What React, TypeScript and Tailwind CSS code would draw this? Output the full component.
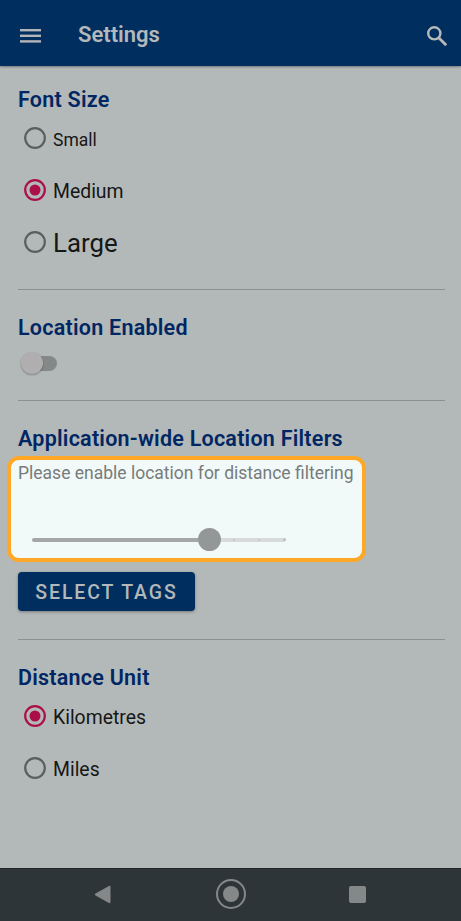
import type { ReactNode } from "react";

function Heading({ children, className = "" }: { children: ReactNode; className?: string }) {
  return (
    <h2
      className={`h-[26px] text-[21.5px] leading-[28px] font-semibold tracking-[0.24px] whitespace-nowrap text-[#002663] ${className}`}
    >
      {children}
    </h2>
  );
}

function Radio({ label, checked = false, className }: { label: string; checked?: boolean; className: string }) {
  return (
    <div className={`flex items-center gap-[7px] pl-[6px] text-black/90 ${className}`}>
      <svg
        className={`size-[22px] shrink-0 ${checked ? "text-[#ab0f47]" : "text-[#5b5e5f]"}`}
        viewBox="0 0 22 22"
        fill="none"
      >
        <circle cx="11" cy="11" r="9.8" stroke="currentColor" strokeWidth="2.2" />
        {checked && <circle cx="11" cy="11" r="5.5" fill="currentColor" />}
      </svg>
      <span className="pt-[3px] whitespace-nowrap">{label}</span>
    </div>
  );
}

function Divider({ className }: { className: string }) {
  return <div className={`h-px w-[427px] bg-[#8d9192] ${className}`} />;
}

export default function App() {
  return (
    <div className="flex h-[921px] w-[461px] flex-col overflow-hidden bg-[#b3b8b8] font-['Roboto',sans-serif]">
      <header className="flex h-[66px] shrink-0 items-center bg-[#002e5f] pt-[4px] pr-[14px] pl-[20px] shadow-[0_1px_2px_rgba(0,0,0,0.35)]">
        <svg className="mt-[2px] h-[14px] w-[21px]" viewBox="0 0 21 14" fill="#b3b5b8">
          <rect width="21" height="2.4" />
          <rect y="5.6" width="21" height="2.4" />
          <rect y="11.2" width="21" height="2.4" />
        </svg>
        <h1 className="ml-[37px] text-[22px] leading-[26px] font-semibold text-[#b3b8ba]">Settings</h1>
        <svg className="mt-[2px] ml-auto size-[20px]" viewBox="0 0 20 20" fill="none" stroke="#b8b9b9" strokeWidth="2.4">
          <circle cx="7.3" cy="7.3" r="6.1" />
          <path d="M11.7 11.7 19.2 19.2" strokeWidth="2.8" />
        </svg>
      </header>

      <main className="h-[802px] shrink-0 pt-[20px] pl-[18px]">
        <Heading>Font Size</Heading>
        <Radio label="Small" className="h-[52px] text-[17.5px] leading-[22px]" />
        <Radio label="Medium" checked className="h-[52px] text-[19.4px] leading-[24px]" />
        <Radio label="Large" className="h-[52px] text-[25.8px] leading-[37px]" />
        <Divider className="mt-[21px]" />

        <Heading className="mt-[24px]">Location Enabled</Heading>
        <div className="mt-[12px] flex h-[22px] items-center pl-[3px]">
          <span className="z-10 size-[22px] rounded-full bg-[#b1aeb0] shadow-[0_1px_2px_rgba(0,0,0,0.3)]" />
          <span className="-ml-[3px] h-[15px] w-[17px] rounded-r-full bg-[#858889]" />
        </div>
        <Divider className="mt-[26px]" />

        <Heading className="mt-[24px]">Application-wide Location Filters</Heading>
        <div className="mt-[5px] -ml-[11px] h-[106px] w-[359px] rounded-[12px] border-4 border-[#ffa726] bg-[#f1faf9] pt-[2px] pl-[7px]">
          <p className="h-[22px] text-[17.5px] leading-[22px] whitespace-nowrap text-[#777b7b]">
            Please enable location for distance filtering
          </p>
          <div className="mt-[44px] ml-[14px] flex h-[23px] w-[254px] items-center">
            <span className="h-[4px] w-[166px] rounded-l-full bg-[#a3a7a7]" />
            <span className="size-[23px] shrink-0 rounded-full bg-[#939797]" />
            <span className="flex h-[4px] flex-1 items-center justify-end gap-[23px] rounded-r-full bg-[#d7dcdb]">
              <span className="size-[2px] rounded-full bg-[#bec3c3]" />
              <span className="size-[2px] rounded-full bg-[#bec3c3]" />
              <span className="size-[3px] rounded-full bg-[#bec3c3]" />
            </span>
          </div>
        </div>
        <button className="mt-[10px] block h-[39px] w-[177px] rounded-[4px] bg-[#002e5f] pt-[3px] text-[19.5px] leading-[36px] font-medium tracking-[1.9px] whitespace-nowrap text-[#b3b8ba] shadow-[0_1px_3px_rgba(0,0,0,0.35)]">
          SELECT TAGS
        </button>
        <Divider className="mt-[28px]" />

        <Heading className="mt-[24px]">Distance Unit</Heading>
        <Radio label="Kilometres" checked className="h-[52px] text-[19.4px] leading-[24px]" />
        <Radio label="Miles" className="h-[52px] text-[19.4px] leading-[24px]" />
      </main>

      <nav className="flex h-[53px] shrink-0 items-center border-t border-[#1e272b] bg-[#2e3538] pb-[2px] pl-[94px]">
        <svg className="h-[19px] w-[17px]" viewBox="0 0 17 19" fill="#858888">
          <path d="M1.5 8.4 15 .9Q16.5.3 16.5 2v15Q16.5 18.6 15 18L1.5 10.4Q0 9.4 1.5 8.4Z" />
        </svg>
        <span className="ml-[105px] flex size-[30px] items-center justify-center rounded-full border-2 border-[#858888]">
          <span className="size-[16px] rounded-full bg-[#858888]" />
        </span>
        <span className="ml-[103px] size-[17px] rounded-[2px] bg-[#858888]" />
      </nav>
    </div>
  );
}
